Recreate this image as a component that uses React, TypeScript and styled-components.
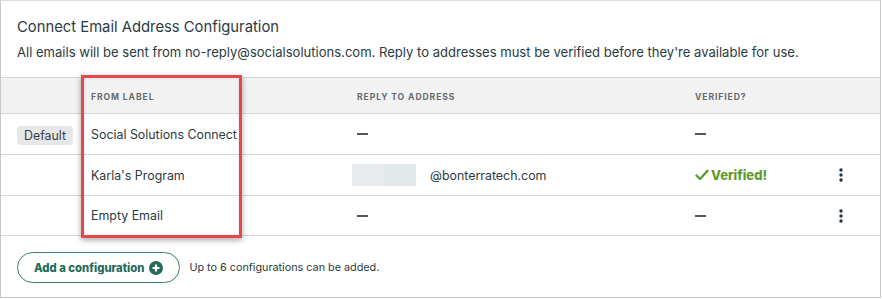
import React from "react";
import styled, { createGlobalStyle } from "styled-components";

const Global = createGlobalStyle`
  html, body { margin: 0; padding: 0; background: #ffffff; }
  body { font-family: Inter, "Noto Sans", sans-serif; color: #2c3a41; }
`;

const Card = styled.div`
  position: relative;
  box-sizing: border-box;
  width: 881px;
  height: 298px;
  border: 1px solid #c9c9c9;
  border-top-color: #dcdcdc;
  background: #fff;
`;

const Head = styled.div`
  padding: 16px 16px 0 16px;
  height: 60px;
`;

const Title = styled.h2`
  margin: 0;
  font-size: 14.8px;
  font-weight: 400;
  line-height: 20px;
  color: #2c3a41;
`;

const Sub = styled.p`
  margin: 5px 0 0 0;
  font-size: 13.05px;
  line-height: 20px;
  color: #2c3a41;
`;

const Row = styled.div<{ $header?: boolean; $h: number }>`
  display: grid;
  grid-template-columns: 90px 266px 338px 1fr 60px;
  align-items: center;
  height: ${(p) => p.$h}px;
  box-sizing: border-box;
  border-top: 1px solid #d6d6d6;
  background: ${(p) => (p.$header ? "#f2f2f2" : "#fff")};
`;

const HeadCell = styled.div`
  font-size: 8.6px;
  font-weight: 700;
  letter-spacing: 0.9px;
  color: #666a6c;
  text-transform: uppercase;
  padding-top: 2px;
`;

const Cell = styled.div`
  font-size: 12.4px;
  color: #2c3a41;
  display: flex;
  align-items: center;
`;

const FirstCell = styled.div`
  padding-left: 16px;
`;

const Badge = styled.span`
  display: inline-block;
  background: #e7e7e7;
  border-radius: 4px;
  padding: 2px 7px;
  font-size: 12.4px;
  line-height: 15px;
  color: #3a4145;
`;

const Dash = styled.span`
  display: block;
  width: 11px;
  height: 2px;
  background: #50585c;
`;

const Redacted = styled.span`
  display: inline-block;
  width: 64px;
  height: 22px;
  margin-left: -5px;
  margin-right: 14px;
  background: linear-gradient(90deg, #e8ebed 0 50%, #e3e8eb 50% 100%);
`;

const Verified = styled.span`
  display: inline-flex;
  align-items: center;
  gap: 2px;
  font-weight: 800;
  font-size: 13px;
  color: #5f9a31;
`;

const Kebab = styled.div`
  display: flex;
  justify-content: center;
  margin-left: -18px;
`;

const Footer = styled.div`
  border-top: 1px solid #d6d6d6;
  display: flex;
  align-items: center;
  gap: 9px;
  padding: 16px 16px 0 16px;
`;

const AddButton = styled.button`
  display: inline-flex;
  align-items: center;
  gap: 5px;
  height: 31px;
  box-sizing: border-box;
  padding: 0 16px 0 16px;
  border: 1px solid #3d7f71;
  border-radius: 16px;
  background: #fff;
  font-family: Inter, "Noto Sans", sans-serif;
  font-size: 11.3px;
  font-weight: 800;
  color: #25695a;
  cursor: pointer;
`;

const Note = styled.span`
  font-size: 10.8px;
  color: #2c3a41;
`;

const Highlight = styled.div`
  position: absolute;
  left: 80px;
  top: 74px;
  width: 161px;
  height: 163px;
  box-sizing: border-box;
  border: 3px solid #e5484b;
  box-shadow: 0 2px 6px rgba(0, 0, 0, 0.35), inset 0 0 3px rgba(0, 0, 0, 0.12);
  pointer-events: none;
`;

const Check = () => (
  <svg width="14" height="12" viewBox="0 0 14 12">
    <path d="M1.5 6.5 L5 10 L12.5 1.8" fill="none" stroke="#5f9a31" strokeWidth="2.4" strokeLinecap="round" strokeLinejoin="round" />
  </svg>
);

const Dots = () => (
  <svg width="4" height="14" viewBox="0 0 4 14">
    <circle cx="2" cy="2" r="1.7" fill="#1f3440" />
    <circle cx="2" cy="7" r="1.7" fill="#1f3440" />
    <circle cx="2" cy="12" r="1.7" fill="#1f3440" />
  </svg>
);

const PlusCircle = () => (
  <svg width="14" height="14" viewBox="0 0 14 14">
    <circle cx="7" cy="7" r="7" fill="#25695a" />
    <path d="M7 3.5 V10.5 M3.5 7 H10.5" stroke="#fff" strokeWidth="2.2" />
  </svg>
);

export default function App() {
  return (
    <>
      <Global />
      <Card>
        <Head>
          <Title>Connect Email Address Configuration</Title>
          <Sub>
            All emails will be sent from no-reply@socialsolutions.com. Reply to addresses must be verified before they're available for use.
          </Sub>
        </Head>
        <Row $header $h={36}>
          <div />
          <HeadCell>From label</HeadCell>
          <HeadCell>Reply to address</HeadCell>
          <HeadCell>Verified?</HeadCell>
          <div />
        </Row>
        <Row $h={41}>
          <FirstCell>
            <Badge>Default</Badge>
          </FirstCell>
          <Cell>Social Solutions Connect</Cell>
          <Cell><Dash /></Cell>
          <Cell><Dash /></Cell>
          <div />
        </Row>
        <Row $h={41}>
          <div />
          <Cell>Karla's Program</Cell>
          <Cell>
            <Redacted />
            @bonterratech.com
          </Cell>
          <Cell>
            <Verified>
              <Check />
              Verified!
            </Verified>
          </Cell>
          <Kebab><Dots /></Kebab>
        </Row>
        <Row $h={40}>
          <div />
          <Cell>Empty Email</Cell>
          <Cell><Dash /></Cell>
          <Cell><Dash /></Cell>
          <Kebab><Dots /></Kebab>
        </Row>
        <Footer>
          <AddButton>
            Add a configuration
            <PlusCircle />
          </AddButton>
          <Note>Up to 6 configurations can be added.</Note>
        </Footer>
        <Highlight />
      </Card>
    </>
  );
}
